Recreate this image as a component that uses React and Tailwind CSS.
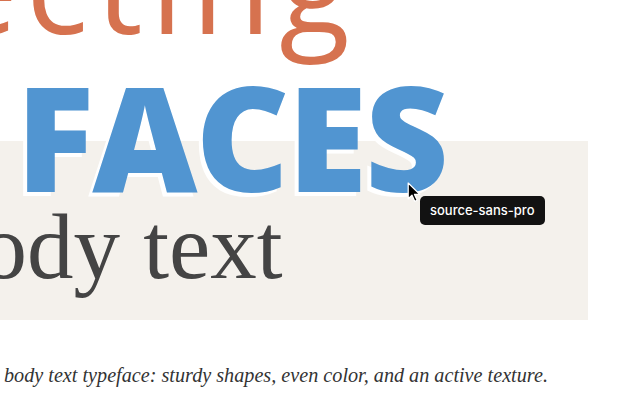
export default function App() {
  return (
    <div className="relative flex flex-col w-[640px] h-[400px] overflow-hidden bg-white">
      {/* heading, first line cut off at the top and left */}
      <div className="shrink-0 ml-[-55px] mt-[-81px] whitespace-nowrap font-['Open_Sans',sans-serif] text-[130px] leading-[130px] font-normal tracking-[8px] text-[#d6724f]">
        ecting
      </div>

      <div className="shrink-0 flex flex-col mt-[92px] w-[588px] h-[179px] bg-[#f4f1ec]">
        <div className="shrink-0 ml-[16px] mt-[-78px] whitespace-nowrap font-['Open_Sans',sans-serif] text-[145px] leading-[145px] font-extrabold tracking-[-2px] text-[#5195d1] [text-shadow:-4px_4px_0_#fff]">
          FACES
        </div>
        <div className="shrink-0 ml-[-66px] mt-[-9px] whitespace-nowrap font-['Liberation_Serif',serif] text-[93px] leading-[95px] text-[#444]">
          body text
        </div>
      </div>

      <p className="shrink-0 mt-[43px] pl-[4px] whitespace-nowrap font-['Liberation_Serif',serif] italic text-[20.2px] leading-[24px] text-[#333]">
        body text typeface: sturdy shapes, even color, and an active texture.
      </p>

      {/* cursor */}
      <svg className="absolute left-[407px] top-[182px]" width="15" height="21" viewBox="0 0 14 20">
        <path d="M1 1 L1 16 L4.6 12.6 L7.2 18.4 L9.6 17.4 L7 11.8 L12 11.8 Z" fill="#000" stroke="#fff" strokeWidth="1.2" strokeLinejoin="round" />
      </svg>

      {/* tooltip */}
      <div className="absolute left-[420px] top-[196px] h-[29px] px-[10px] flex items-center rounded-[5px] bg-[#121212] text-white font-['Inter',sans-serif] text-[13px] font-medium">
        source-sans-pro
      </div>
    </div>
  );
}
